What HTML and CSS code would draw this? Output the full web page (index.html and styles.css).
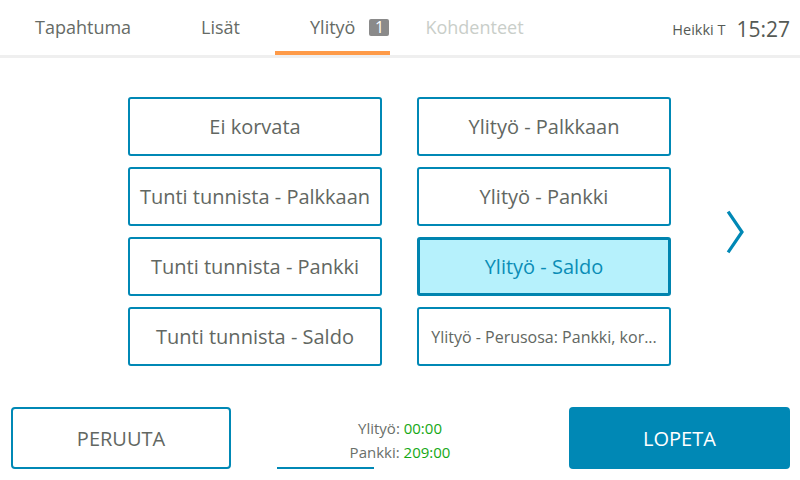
FILE: index.html
```html
<!DOCTYPE html>
<html lang="fi">
<head>
<meta charset="utf-8">
<link rel="stylesheet" href="styles.css">
</head>
<body>
<div class="screen">
  <header class="topbar">
    <nav class="tabs">
      <div class="tab">Tapahtuma</div>
      <div class="tab">Lisät</div>
      <div class="tab tab-active">Ylityö <span class="badge">1</span></div>
      <div class="tab tab-disabled">Kohdenteet</div>
    </nav>
    <div class="user">
      <span class="user-name">Heikki T</span>
      <span class="clock">15:27</span>
    </div>
  </header>

  <main class="content">
    <div class="choices">
      <button class="choice">Ei korvata</button>
      <button class="choice">Ylityö - Palkkaan</button>
      <button class="choice">Tunti tunnista - Palkkaan</button>
      <button class="choice">Ylityö - Pankki</button>
      <button class="choice">Tunti tunnista - Pankki</button>
      <button class="choice choice-selected">Ylityö - Saldo</button>
      <button class="choice">Tunti tunnista - Saldo</button>
      <button class="choice choice-small">Ylityö - Perusosa: Pankki, kor...</button>
    </div>
    <div class="next">
      <svg width="20" height="44" viewBox="0 0 20 44">
        <path d="M3 3 L16 22 L3 41" fill="none" stroke="#0088b5" stroke-width="3.2" stroke-linecap="square"/>
      </svg>
    </div>
  </main>

  <footer class="footer">
    <button class="btn btn-outline">PERUUTA</button>
    <div class="summary">
      <div class="summary-line">Ylityö: <span class="value">00:00</span></div>
      <div class="summary-line">Pankki: <span class="value">209:00</span></div>
      <div class="progress"></div>
    </div>
    <button class="btn btn-primary">LOPETA</button>
  </footer>
</div>
</body>
</html>
```

FILE: styles.css
```css
* { box-sizing: border-box; }
html, body {
  margin: 0;
  padding: 0;
  background: #ffffff;
}
body {
  font-family: "Open Sans", "Noto Sans", sans-serif;
  color: #626762;
}
.screen {
  width: 800px;
  height: 480px;
  display: flex;
  flex-direction: column;
  overflow: hidden;
}

/* Header */
.topbar {
  height: 58px;
  display: flex;
  justify-content: space-between;
  align-items: stretch;
  border-bottom: 3px solid #efefef;
}
.tabs {
  display: flex;
  align-items: stretch;
}
.tab {
  display: flex;
  align-items: center;
  padding: 3px 35px 0;
  font-size: 18px;
  color: #666b66;
  border-bottom: 4px solid transparent;
}
.tab-active {
  border-bottom-color: #fe9a48;
  padding-right: 1px;
}
.tab-disabled {
  color: #c9cec9;
}
.badge {
  display: inline-flex;
  align-items: center;
  justify-content: center;
  width: 20px;
  height: 17px;
  margin-left: 14px;
  background: #8a8a8a;
  color: #ffffff;
  border-radius: 2px;
  font-size: 16px;
  line-height: 17px;
}
.user {
  display: flex;
  align-items: center;
  gap: 11px;
  padding-right: 10px;
  padding-top: 3px;
}
.user-name {
  font-size: 14.5px;
  color: #555a55;
}
.clock {
  font-size: 21px;
  color: #555a55;
}

/* Content */
.content {
  display: flex;
  align-items: center;
  padding: 39px 0 0 128px;
}
.choices {
  display: grid;
  grid-template-columns: 254px 254px;
  grid-auto-rows: 59px;
  column-gap: 35px;
  row-gap: 11px;
}
.choice {
  font-family: "Open Sans", "Noto Sans", sans-serif;
  font-size: 20px;
  color: #626762;
  background: #ffffff;
  border: 2px solid #0088b5;
  border-radius: 3px;
  padding: 0 6px;
  white-space: nowrap;
  overflow: hidden;
}
.choice-selected {
  background: #b6f1fc;
  border-width: 3px;
  border-color: #0084af;
  color: #0a8db6;
}
.choice-small {
  font-size: 16px;
}
.next {
  margin-left: 55px;
  display: flex;
  align-items: center;
}

/* Footer */
.footer {
  margin-top: 41px;
  height: 62px;
  display: flex;
  padding: 0 10px 0 11px;
}
.btn {
  font-family: "Open Sans", "Noto Sans", sans-serif;
  font-size: 20px;
  border-radius: 4px;
  padding: 0;
}
.btn-outline {
  width: 220px;
  background: #ffffff;
  border: 2px solid #0088b5;
  color: #626762;
}
.btn-primary {
  width: 221px;
  background: #0088b5;
  border: none;
  color: #ffffff;
}
.summary {
  flex: 1;
  padding-top: 9px;
  display: flex;
  flex-direction: column;
  align-items: center;
}
.summary-line {
  font-size: 15px;
  line-height: 24px;
  color: #6a6f6a;
}
.value {
  color: #15a815;
}
.progress {
  align-self: flex-start;
  margin-left: 46px;
  margin-top: 3px;
  width: 97px;
  height: 3px;
  background: #0088b5;
}
```
